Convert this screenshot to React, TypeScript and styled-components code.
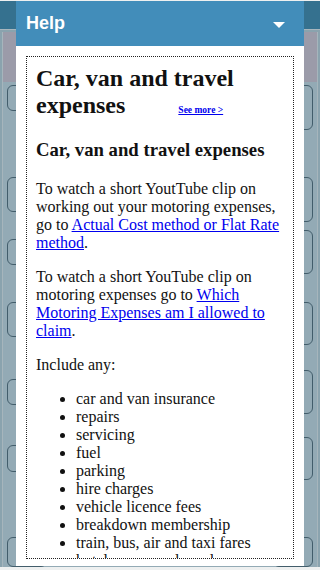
import styled, { createGlobalStyle } from "styled-components";

const GlobalStyle = createGlobalStyle`
  html, body {
    margin: 0;
    padding: 0;
    background: #eef0f0;
  }
`;

const leftBoxes = [
  { top: 3, height: 26 },
  { top: 66, height: 35 },
  { top: 27, height: 26 },
  { top: 37, height: 35 },
  { top: 42, height: 26 },
  { top: 40, height: 27 },
  { top: 65, height: 30 },
];

const rightBoxes = [
  { top: 3, height: 45 },
  { top: 47, height: 45 },
  { top: 8, height: 44 },
  { top: 28, height: 43 },
  { top: 25, height: 44 },
  { top: 23, height: 43 },
  { top: 57, height: 30 },
];

const items = [
  "car and van insurance",
  "repairs",
  "servicing",
  "fuel",
  "parking",
  "hire charges",
  "vehicle licence fees",
  "breakdown membership",
  "train, bus, air and taxi fares",
  "hotel rooms and meals on overnight business trips",
];

export default function App() {
  return (
    <>
      <GlobalStyle />
      <Screen>
        <Backdrop>
          <TopBar />
          <Panel>
            <PanelInner>
              <Banner />
              <Fields>
                <FieldColumn>
                  {leftBoxes.map((b, i) => (
                    <FieldBox key={i} $top={b.top} $height={b.height} />
                  ))}
                </FieldColumn>
                <FieldColumn>
                  {rightBoxes.map((b, i) => (
                    <FieldBox key={i} $top={b.top} $height={b.height} />
                  ))}
                </FieldColumn>
              </Fields>
            </PanelInner>
          </Panel>
        </Backdrop>

        <Modal>
          <ModalHeader>
            <Title>Help</Title>
            <Caret />
          </ModalHeader>
          <ModalBody>
            <HelpBox>
              <MainHeading>
                Car, van and travel expenses
                <SeeMore href="#">See more &gt;</SeeMore>
              </MainHeading>
              <SubHeading>Car, van and travel expenses</SubHeading>
              <Para>
                To watch a short YoutTube clip on working out your motoring
                expenses, go to{" "}
                <Link href="#">Actual Cost method or Flat Rate method</Link>.
              </Para>
              <Para>
                To watch a short YouTube clip on motoring expenses go to{" "}
                <Link href="#">Which Motoring Expenses am I allowed to claim</Link>.
              </Para>
              <Para>Include any:</Para>
              <List>
                {items.map((item) => (
                  <li key={item}>{item}</li>
                ))}
              </List>
            </HelpBox>
          </ModalBody>
        </Modal>
      </Screen>
    </>
  );
}

const Screen = styled.div`
  position: relative;
  width: 320px;
  height: 570px;
  overflow: hidden;
  background: #eef0f0;
`;

const Backdrop = styled.div`
  margin-top: 1px;
  height: 566px;
  display: flex;
  flex-direction: column;
`;

const TopBar = styled.div`
  height: 56px;
  background: #35718f;
`;

const Panel = styled.div`
  flex: 1;
  display: flex;
  background: #8aa3ae;
  border-top: 1px solid #a8b6bd;
  padding: 2px 2px 0 2px;
`;

const PanelInner = styled.div`
  flex: 1;
  display: flex;
  flex-direction: column;
  background: #93aab5;
  border-left: 1px solid #a6b5bc;
  border-right: 1px solid #a6b5bc;
`;

const Banner = styled.div`
  height: 50px;
  background: #9b9ba9;
`;

const Fields = styled.div`
  display: flex;
  justify-content: space-between;
  padding: 0 4px;
`;

const FieldColumn = styled.div`
  display: flex;
  flex-direction: column;
  width: 40px;
`;

const FieldBox = styled.div<{ $top: number; $height: number }>`
  margin-top: ${(p) => p.$top}px;
  height: ${(p) => p.$height}px;
  border: 1.5px solid #425d6b;
  border-radius: 6px;
  box-sizing: border-box;
`;

const Modal = styled.div`
  position: absolute;
  top: 1px;
  left: 16px;
  width: 288px;
  height: 565px;
  display: flex;
  flex-direction: column;
  background: #fff;
`;

const ModalHeader = styled.div`
  height: 45px;
  flex-shrink: 0;
  display: flex;
  align-items: center;
  justify-content: space-between;
  padding: 0 19px 0 10px;
  background: #428dba;
`;

const Title = styled.span`
  font-family: "Liberation Sans", Arial, sans-serif;
  font-weight: bold;
  font-size: 18px;
  color: #fff;
`;

const Caret = styled.span`
  width: 0;
  height: 0;
  border-left: 6px solid transparent;
  border-right: 6px solid transparent;
  border-top: 6px solid #fff;
  margin-top: 2px;
`;

const ModalBody = styled.div`
  flex: 1;
  display: flex;
  min-height: 0;
  padding: 10px 10px 7px 10px;
`;

const HelpBox = styled.div`
  flex: 1;
  border: 1px dotted #222;
  overflow: hidden;
  padding: 8px 9px;
  font-family: "Liberation Serif", "Times New Roman", serif;
  font-size: 16px;
  color: #111;
`;

const MainHeading = styled.h2`
  margin: 0 0 0.83em;
  font-size: 24px;
  font-weight: bold;
`;

const SeeMore = styled.a`
  margin-left: 53px;
  font-size: 9.5px;
  font-weight: bold;
  color: #00e;
`;

const SubHeading = styled.h3`
  margin: 1em 0;
  font-size: 18.72px;
  font-weight: bold;
`;

const Para = styled.p`
  margin: 1em 0;
`;

const Link = styled.a`
  color: #00e;
`;

const List = styled.ul`
  margin: 1em 0;
  padding-left: 40px;
`;
